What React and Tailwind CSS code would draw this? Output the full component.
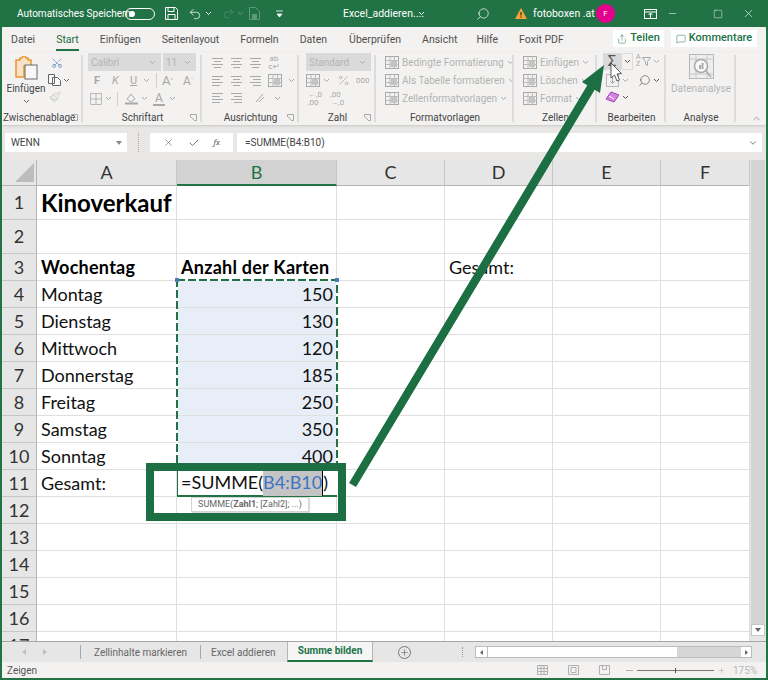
import React from "react";
import { Search, Minus, Square, X, Check, Plus, ChevronDown, ChevronUp, Scissors, Paintbrush, Undo2, Redo2, MessageSquare, Share, Percent } from "lucide-react";

const UI = { fontFamily: 'Roboto, "Noto Sans", sans-serif' };

const Chev = ({ c = "#a9a9a9", cls = "" }) => (
  <svg width="7" height="5" viewBox="0 0 7 5" className={"shrink-0 " + cls}><path d="M1 1l2.5 2.5L6 1" stroke={c} strokeWidth="1" fill="none" /></svg>
);
const Lines = ({ kind = "c", w = 13 }) => {
  const m = { l: [[1, 12], [1, 9], [1, 12], [1, 9]], c: [[1, 12], [3, 10], [1, 12], [3, 10]], r: [[1, 12], [4, 12], [1, 12], [4, 12]] }[kind];
  return (
    <svg width={w} height="12" viewBox="0 0 13 12" className="shrink-0">
      {m.map((a, i) => <path key={i} d={`M${a[0]} ${1.5 + i * 3}H${a[1]}`} stroke="#a9a9a9" strokeWidth="1" />)}
    </svg>
  );
};
const StyleIcon = () => (
  <svg width="14" height="13" viewBox="0 0 14 13" className="shrink-0"><rect x=".5" y=".5" width="13" height="12" fill="#f3f2f1" stroke="#a9a9a9" /><path d="M.5 4.500h13M.5 8.500h13M5 .5v12M9.500.5v12" stroke="#bcbcbc" /><rect x="6" y="5" width="6" height="6" fill="#c4c4c4" /></svg>
);
const Combo = ({ w, text }) => (
  <div className={`h-[18px] bg-[#dadada] flex items-center justify-between pl-[3px] pr-[5px] ${w}`}>
    <span className="text-[10px] text-[#b4b4b4]">{text}</span><Chev />
  </div>
);
const Group = ({ w, label, launcher = true, left = false, children }) => (
  <div className={`${w} shrink-0 flex flex-col h-full relative`}>
    <div className="h-[55px] shrink-0 flex">{children}</div>
    <div className={`flex-1 flex items-center text-[10px] text-[#444] pt-[2px] whitespace-nowrap ${left ? "pl-[1px]" : "justify-center"}`}>{label}</div>
    {launcher && <svg width="7" height="7" viewBox="0 0 7 7" className="absolute right-[5px] bottom-[4px]"><path d="M.5 3V.5H6.500V6.500H4M1 3l3 3" stroke="#a9a9a9" fill="none" /></svg>}
    <div className="absolute right-0 top-[3px] bottom-[3px] w-[2px] bg-[#dcdcdc]" />
  </div>
);
const Tab = ({ ml, children, active }) => (
  <div className={`${ml} relative text-[10.5px] whitespace-nowrap ${active ? "text-[#1e6b40]" : "text-[#505050]"}`}>
    {children}
    {active && <div className="absolute left-0 right-0 top-[17px] h-[2px] bg-[#217346]" />}
  </div>
);
const StyleRow = ({ label }) => (
  <div className="h-[18px] flex items-center gap-[3px]">
    <StyleIcon /><span className="text-[10px] text-[#b2b2b2] whitespace-nowrap">{label}</span><Chev />
  </div>
);

const rows = [
  [1, "Kinoverkauf", "", "h"], [2, "", ""], [3, "Wochentag", "Anzahl der Karten", "b"],
  [4, "Montag", "150"], [5, "Dienstag", "130"], [6, "Mittwoch", "120"], [7, "Donnerstag", "185"],
  [8, "Freitag", "250"], [9, "Samstag", "350"], [10, "Sonntag", "400"], [11, "Gesamt:", ""],
  [12, "", ""], [13, "", ""], [14, "", ""], [15, "", ""], [16, "", ""], [17, "", ""],
];
const CELL = { fontFamily: 'Lato, "Liberation Sans", sans-serif' };

export default function App() {
  return (
    <div style={UI} className="w-[768px] h-[680px] relative overflow-hidden flex flex-col bg-[#f3f2f1] border-x-2 border-b-2 border-[#217346]">
      {/* Title bar */}
      <div className="h-[27px] shrink-0 -mx-[2px] bg-[#217346] flex items-center text-white text-[10.5px]">
        <span className="ml-[17px] w-[103px] whitespace-nowrap text-[10px]">Automatisches Speichern</span>
        <div className="ml-[5px] w-[30px] h-[12px] rounded-full border border-white flex items-center pl-[3px]"><div className="w-[6px] h-[6px] rounded-full bg-white" /></div>
        <svg width="13" height="13" viewBox="0 0 13 13" className="ml-[10px]"><path d="M.5.5h10l2 2v10H.5zM3 .5v4h6v-4M3 12.500v-5h7v5" stroke="#fff" fill="none" /></svg>
        <Undo2 size={14} strokeWidth={1.3} className="ml-[10px]" />
        <Chev c="#fff" cls="ml-[3px]" />
        <Redo2 size={13} strokeWidth={1.1} className="ml-[10px] text-[#5c9a78]" />
        <Chev c="#5c9a78" cls="ml-[2px]" />
        <svg width="11" height="13" viewBox="0 0 11 13" className="ml-[5px]"><path d="M.5.5h6l4 4v8H.5z" stroke="#5c9a78" fill="none" /><path d="M3 7h5v5H3z" fill="#5c9a78" /></svg>
        <svg width="7" height="8" viewBox="0 0 7 8" className="ml-[16px]"><path d="M0 1h7M1 4h5l-2.500 3z" stroke="#fff" fill="#fff" strokeWidth=".8" /></svg>
        <span className="ml-[60px] w-[72px] whitespace-nowrap">Excel_addieren....</span>
        <Chev c="#fff" cls="ml-[3px]" />
        <Search size={14} strokeWidth={1.2} className="ml-[51px] -scale-x-100" />
        <svg width="12" height="11" viewBox="0 0 12 11" className="ml-[25px]"><path d="M6 0l6 11H0z" fill="#f2a33c" /><path d="M6 4v3.500M6 8.500v1.200" stroke="#3a2a10" strokeWidth="1.200" /></svg>
        <span className="ml-[6px] w-[57px] whitespace-nowrap">fotoboxen .at</span>
        <div className="ml-[6px] w-[19px] h-[19px] rounded-full bg-[#e3008c] flex items-center justify-center text-[8px]">F</div>
        <svg width="13" height="10" viewBox="0 0 13 10" className="ml-[29px]"><rect x=".5" y=".5" width="12" height="9" stroke="#fff" fill="none" /><path d="M.5 3h12M6.500 9V4.500M4.500 6l2-2 2 2" stroke="#fff" fill="none" /></svg>
        <Minus size={11} strokeWidth={1.2} className="ml-[10px]" />
        <Square size={10} strokeWidth={1.1} className="ml-[35px]" />
        <X size={13} strokeWidth={1.1} className="ml-[19px]" />
      </div>

      {/* Ribbon tabs */}
      <div className="h-[25px] shrink-0 flex items-center pt-[1px]">
        <Tab ml="ml-[9px]">Datei</Tab>
        <Tab ml="ml-[21px]" active>Start</Tab>
        <Tab ml="ml-[21px]">Einfügen</Tab>
        <Tab ml="ml-[21px]">Seitenlayout</Tab>
        <Tab ml="ml-[21px]">Formeln</Tab>
        <Tab ml="ml-[21px]">Daten</Tab>
        <Tab ml="ml-[22px]">Überprüfen</Tab>
        <Tab ml="ml-[21px]">Ansicht</Tab>
        <Tab ml="ml-[19px]">Hilfe</Tab>
        <Tab ml="ml-[21px]">Foxit PDF</Tab>
        <div className="absolute left-[611px] top-[30px] w-[51px] h-[17px] bg-white flex items-center justify-center gap-[3px] text-[11px] text-[#217346] font-medium"><Share size={10} strokeWidth={1.2} />Teilen</div>
        <div className="absolute left-[669px] top-[30px] w-[86px] h-[17px] bg-white flex items-center justify-center gap-[3px] text-[11px] text-[#217346] font-medium"><MessageSquare size={10} strokeWidth={1.2} />Kommentare</div>
      </div>

      {/* Ribbon */}
      <div className="h-[73px] shrink-0 flex shadow-[0_1px_2px_#c8c8c8] relative">
        <Group w="w-[81px]" label="Zwischenablage" left>
          <div className="w-[46px] flex flex-col items-center pt-[4px] pl-[2px]">
            <svg width="23" height="24" viewBox="0 0 23 24"><path d="M1 4h4V2h2l1-2h2l1 2h2v2h3v6H9v11H1z" fill="#f7e3c8" stroke="#e8952f" strokeWidth="1.500" /><rect x="10" y="9" width="12" height="14" fill="#f8f8f8" stroke="#6a6a6a" /></svg>
            <span className="text-[10px] text-[#444] mt-[3px] leading-[12px]">Einfügen</span>
            <Chev c="#666" cls="mt-[4px]" />
          </div>
          <div className="flex flex-col pt-[5px] gap-[5px]">
            <Scissors size={12} strokeWidth={1.2} className="ml-[3px] text-[#4a7ebb] -rotate-90" />
            <div className="flex items-center gap-[2px]"><svg width="13" height="12" viewBox="0 0 13 12"><path d="M.5.5h6v9h-6zM4.500 3.500h5l3 3v5h-8z" stroke="#666" fill="#f8f8f8" /></svg><Chev c="#666" /></div>
            <Paintbrush size={12} strokeWidth={1.2} className="text-[#b4b4b4] ml-[1px]" />
          </div>
        </Group>
        <Group w="w-[119px]" label="Schriftart">
          <div className="flex flex-col pl-[5px] w-full">
            <div className="flex gap-[2px] mt-[1px]"><Combo w="w-[73px]" text="Calibri" /><Combo w="w-[33px]" text="11" /></div>
            <div className="h-[21px] flex items-center text-[#a8a8a8] text-[11px]">
              <b className="ml-[6px] w-[18px] font-bold">F</b><i className="w-[18px]">K</i><u className="w-[13px]">U</u><Chev /><span className="ml-[6px] mr-[5px] w-px h-[15px] bg-[#d0d0d0]" /><span className="text-[13px] w-[20px]">A<sup className="text-[6px]">^</sup></span><span className="text-[12px] ml-px">A<sup className="text-[6px]">ˇ</sup></span>
            </div>
            <div className="h-[18px] flex items-center">
              <svg width="12" height="12" viewBox="0 0 12 12" className="ml-[2px]"><path d="M.5.500h11v11H.5zM6 .5v11M.5 6h11" stroke="#b8b8b8" fill="none" /></svg>
              <Chev cls="ml-[3px]" /><span className="mx-[5px] w-px h-[14px] bg-[#d0d0d0]" />
              <svg width="13" height="13" viewBox="0 0 13 13" className="ml-[2px]"><path d="M2 7l4-5 4 5-4 3z" fill="none" stroke="#a9a9a9" /><path d="M0 11.500h13" stroke="#a9a9a9" strokeWidth="2" /></svg>
              <Chev cls="ml-[3px]" />
              <span className="ml-[5px] text-[12px] leading-[12px] text-[#a8a8a8] border-b-2 border-[#a9a9a9] px-[2px]">A</span>
              <Chev cls="ml-[4px]" />
            </div>
          </div>
        </Group>
        <Group w="w-[97px]" label="Ausrichtung">
          <div className="flex flex-col pl-[9px] w-full pt-[2px]">
            <div className="h-[18px] flex items-center gap-[6px]"><Lines kind="c" /><Lines kind="c" /><Lines kind="c" /><span className="text-[8px] leading-[8px] text-[#a8a8a8] w-[12px] text-center">ab<br />c↵</span></div>
            <div className="h-[18px] flex items-center gap-[6px]"><Lines kind="l" /><Lines kind="c" /><Lines kind="r" /><StyleIcon /><Chev /></div>
            <div className="h-[18px] flex items-center gap-[6px]"><Lines kind="l" /><Lines kind="r" /><svg width="14" height="12" viewBox="0 0 14 12" className="ml-[5px]"><path d="M2 10L9 2M5 10l5-5" stroke="#a9a9a9" fill="none" /></svg><Chev /></div>
          </div>
        </Group>
        <Group w="w-[77px]" label="Zahl">
          <div className="flex flex-col pl-[7px] w-full">
            <div className="mt-[1px]"><Combo w="w-[65px]" text="Standard" /></div>
            <div className="h-[21px] flex items-center text-[#a8a8a8]"><StyleIcon /><Chev cls="ml-[3px]" /><Percent size={13} strokeWidth={1.300} className="ml-[7px]" /><span className="text-[8px] ml-[6px]">000</span></div>
            <div className="h-[18px] flex items-center text-[8px] leading-[8px] text-[#a8a8a8] gap-[8px] pl-[2px]"><span>←,0<br />,00</span><span>,00<br />→,0</span></div>
          </div>
        </Group>
        <Group w="w-[138px]" label="Formatvorlagen" launcher={false}>
          <div className="flex flex-col pl-[9px] pt-[1px]"><StyleRow label="Bedingte Formatierung" /><StyleRow label="Als Tabelle formatieren" /><StyleRow label="Zellenformatvorlagen" /></div>
        </Group>
        <Group w="w-[83px]" label="Zellen" launcher={false}>
          <div className="flex flex-col pl-[9px] pt-[1px]"><StyleRow label="Einfügen" /><StyleRow label="Löschen" /><StyleRow label="Format" /></div>
        </Group>
        <Group w="w-[69px]" label="Bearbeiten" launcher={false}>
          <div className="flex flex-col pl-[6px] w-full">
            <div className="h-[18px] flex items-center">
              <div className="w-[18px] h-[17px] bg-[#d9d9d9] flex items-center justify-center text-[15px] text-[#555] leading-none">Σ</div>
              <div className="w-[12px] h-[17px] border border-[#dcdcdc] flex items-center justify-center"><Chev c="#555" /></div>
              <span className="ml-[3px] text-[7px] leading-[7px] text-[#a8a8a8]">A<br />Z</span>
              <svg width="9" height="9" viewBox="0 0 9 9" className="ml-[1px]"><path d="M.5.500h8L5.500 4.500v4l-2-1v-3z" stroke="#a9a9a9" fill="none" /></svg>
              <Chev cls="ml-[2px]" />
            </div>
            <div className="h-[18px] flex items-center mt-[1px]">
              <svg width="13" height="13" viewBox="0 0 13 13" className="ml-[3px]"><rect x=".5" y=".5" width="12" height="12" fill="#f2f2f2" stroke="#b8b8b8" /><path d="M6.500 3v6M4 7l2.500 2.500L9 7" stroke="#a9a9a9" fill="none" /></svg>
              <Chev cls="ml-[3px]" />
              <Search size={13} strokeWidth={1.200} className="ml-[9px] -scale-x-100 text-[#555]" />
              <Chev c="#555" cls="ml-[2px]" />
            </div>
            <div className="h-[16px] flex items-center">
              <svg width="13" height="12" viewBox="0 0 13 12" className="ml-[3px]"><path d="M5 1l8 3-5 7-8-3z" fill="#d383e0" stroke="#a53fb8" /><path d="M3 5l5 3" stroke="#fff" /></svg>
              <Chev c="#555" cls="ml-[3px]" />
            </div>
          </div>
        </Group>
        <Group w="w-[70px]" label="Analyse" launcher={false}>
          <div className="flex flex-col items-center w-full pt-[2px]">
            <svg width="25" height="25" viewBox="0 0 25 25"><rect x=".5" y=".5" width="24" height="24" fill="#eeeeee" stroke="#b8b8b8" /><path d="M.5 5h24M.5 20h24M7 .5v24M18 .5v24" stroke="#c8c8c8" /><circle cx="12" cy="12" r="6.500" fill="#f8f8f8" stroke="#a9a9a9" strokeWidth="1.500" /><path d="M10 15v-4h2v4zM12.500 15V9h2v6z" fill="#a9a9a9" /><path d="M17 17l5 6" stroke="#a9a9a9" strokeWidth="1.500" /></svg>
            <span className="text-[10px] text-[#b4b4b4] mt-[2px] whitespace-nowrap">Datenanalyse</span>
          </div>
        </Group>
        <ChevronUp size={11} strokeWidth={1.200} className="absolute right-[4px] bottom-[1px] text-[#555]" />
      </div>

      {/* Formula bar */}
      <div className="h-[35px] shrink-0 bg-[#e8e7e6] flex pt-[8px] pl-[3px] pr-[4px]">
        <div className="h-[19px] w-[122px] bg-white flex items-center justify-between pl-[6px] pr-[5px]">
          <span className="text-[10px] text-[#444]">WENN</span><svg width="6" height="4" viewBox="0 0 6 4"><path d="M0 0h6L3 4z" fill="#888" /></svg>
        </div>
        <div className="ml-[11px] w-[1px] h-[19px] border-l border-dotted border-[#aaa]" />
        <div className="ml-[11px] h-[19px] w-[83px] bg-white flex items-center justify-around px-[6px]">
          <X size={11} strokeWidth={1.400} className="text-[#666]" />
          <Check size={12} strokeWidth={1.800} className="text-[#666]" />
          <span className="text-[9px] italic font-serif text-[#666]">fx</span>
        </div>
        <div className="ml-[4px] h-[19px] flex-1 bg-white flex items-center justify-between pl-[8px] pr-[4px]">
          <span className="text-[10px] text-[#444]">=SUMME(B4:B10)</span><ChevronDown size={10} className="text-[#666]" />
        </div>
      </div>

      {/* Sheet */}
      <div className="h-[481px] shrink-0 flex overflow-hidden relative bg-white">
        <div style={CELL} className="w-[748px] shrink-0 grid grid-cols-[35px_140px_160px_108px_108px_108px_89px] grid-rows-[26px_34px_34px_27px_27px_27px_27px_27px_27px_27px_27px_27px_27px_27px_27px_27px_27px_27px] text-[#111] text-[18px]">
          <div className="bg-[#e6e6e6] border-b border-r border-[#b5b5b5] flex items-end justify-end pr-[2px] pb-[3px]">
            <div className="w-0 h-0 border-l-[19px] border-l-transparent border-b-[19px] border-b-[#bdbdbd]" />
          </div>
          {["A", "B", "C", "D", "E", "F"].map((c) => (
            <div key={c} className={`flex items-center justify-center border-r text-[18px] ${c === "B" ? "bg-[#d2d2d2] text-[#217346] border-b-2 border-b-[#217346] border-r-[#c6c6c6]" : "bg-[#e6e6e6] text-[#333] border-b border-[#c6c6c6] border-b-[#b5b5b5]"}`}>{c}</div>
          ))}
          {rows.map(([n, a, b, kind]) => (
            <React.Fragment key={n}>
              <div className="bg-[#e6e6e6] border-b border-r border-[#c6c6c6] border-r-[#b5b5b5] flex items-center justify-center text-[18px] text-[#333]">{n}</div>
              <div className={`border-b border-r border-[#dfdfdf] flex items-center pl-[4px] whitespace-nowrap ${kind === "h" ? "text-[24px] font-bold text-black" : kind === "b" ? "font-bold text-black tracking-[0.25px]" : ""}`}>{a}</div>
              <div className={`border-b border-r border-[#dfdfdf] flex items-center whitespace-nowrap ${n >= 4 && n <= 10 ? "justify-end pr-[3px] bg-[#e7eef8]" : "pl-[4px]"} ${kind === "b" ? "font-bold text-black tracking-[0.25px]" : ""}`}>{b}</div>
              <div className="border-b border-r border-[#dfdfdf]" />
              <div className="border-b border-r border-[#dfdfdf] flex items-center pl-[4px] whitespace-nowrap">{n === 3 ? "Gesamt:" : ""}</div>
              <div className="border-b border-r border-[#dfdfdf]" />
              <div className="border-b border-r border-[#dfdfdf]" />
            </React.Fragment>
          ))}
        </div>
        <div className="flex-1 bg-[#e6e6e6] flex flex-col">
          <div className="flex-1 mx-[1px] bg-[#d4d4d4]" />
          <div className="h-[12px] mx-[1px] bg-white border border-[#c6c6c6] flex items-center justify-center"><svg width="6" height="4" viewBox="0 0 6 4"><path d="M0 0h6L3 4z" fill="#666" /></svg></div>
          <div className="h-[5px]" />
        </div>

        {/* Marching ants around B4:B10 */}
        <svg width="164" height="194" viewBox="0 0 164 194" className="absolute left-[173px] top-[118px] pointer-events-none">
          <rect x="2" y="2" width="160" height="190" fill="none" stroke="#fff" strokeWidth="2" />
          <rect x="2" y="2" width="160" height="190" fill="none" stroke="#217346" strokeWidth="2" strokeDasharray="8 3" />
          <rect x="0" y="0" width="4" height="4" fill="#4a7ebb" />
          <rect x="160" y="0" width="4" height="4" fill="#4a7ebb" />
        </svg>
        {/* Active cell editor */}
        <div style={CELL} className="absolute left-[175px] top-[309px] w-[160px] h-[28px] bg-white border-b-2 border-[#217346] border-l border-l-[#217346] flex items-center pl-[3px] text-[18px] text-[#111] whitespace-nowrap">
          =SUMME(<span className="bg-[#c4c4c4] text-[#3f74c4] border-r border-black">B4:B10</span>)
        </div>
        {/* Tooltip */}
        <div style={UI} className="absolute left-[189px] top-[337px] w-[118px] h-[15px] bg-white border border-[#d4d4d4] shadow-[1px_1px_1px_#ddd] flex items-center justify-center text-[9px] text-[#666] whitespace-nowrap">
          SUMME(<b className="font-bold">Zahl1</b>; [Zahl2]; ...)
        </div>
      </div>

      {/* Sheet tabs */}
      <div className="h-[21px] shrink-0 bg-[#e6e6e6] border-t border-[#a6a6a6] flex items-center text-[#666]">
        <svg width="4" height="6" viewBox="0 0 4 6" className="ml-[20px]"><path d="M4 0v6L0 3z" fill="#c0c0c0" /></svg>
        <svg width="4" height="6" viewBox="0 0 4 6" className="ml-[17px]"><path d="M0 0v6l4-3z" fill="#c0c0c0" /></svg>
        <span className="ml-[33px] w-px h-[14px] bg-[#a6a6a6]" />
        <span className="ml-[13px] w-[92px] text-[10px] whitespace-nowrap">Zellinhalte markieren</span>
        <span className="ml-[14px] w-px h-[14px] bg-[#a6a6a6]" />
        <span className="ml-[10px] w-[65px] text-[10px] whitespace-nowrap">Excel addieren</span>
        <div className="ml-[11px] w-[86px] h-[20px] -mt-[1px] bg-[#f5f5f5] border-x border-[#b5b5b5] border-b-2 border-b-[#217346] flex items-center justify-center text-[10px] font-bold text-[#217346] whitespace-nowrap">Summe bilden</div>
        <div className="ml-[25px] w-[13px] h-[13px] rounded-full border border-[#777] flex items-center justify-center"><Plus size={9} strokeWidth={2} className="text-[#777]" /></div>
        <div className="ml-[51px] h-[10px] border-l border-dotted border-[#999]" />
        <div className="ml-[12px] w-[277px] h-[12px] bg-[#d6d6d6] flex items-center border border-[#bcbcbc]">
          <div className="w-[12px] h-full bg-white flex items-center justify-center border-r border-[#bcbcbc]"><svg width="3" height="5" viewBox="0 0 3 5"><path d="M3 0v5L0 2.500z" fill="#666" /></svg></div>
          <div className="w-[189px] h-full bg-white" />
          <div className="flex-1" />
          <div className="w-[10px] h-full bg-white flex items-center justify-center"><svg width="3" height="5" viewBox="0 0 3 5"><path d="M0 0v5l3-2.500z" fill="#666" /></svg></div>
        </div>
      </div>

      {/* Status bar */}
      <div className="flex-1 flex items-center text-[10px] text-[#555]">
        <span className="ml-[5px] w-[530px]">Zeigen</span>
        <svg width="11" height="10" viewBox="0 0 11 10"><path d="M.5.5h10v9H.5zM.5 3.500h10M.5 6.500h10M4 .5v9M7 .5v9" stroke="#b0b0b0" fill="none" /></svg>
        <svg width="11" height="10" viewBox="0 0 11 10" className="ml-[20px]"><path d="M.5.5h10v9H.5zM3 2.500h5v5H3z" stroke="#b0b0b0" fill="none" /></svg>
        <svg width="11" height="10" viewBox="0 0 11 10" className="ml-[20px]"><path d="M.5.5h10v9H.5zM3.500.5v4h4v-4" stroke="#b0b0b0" fill="none" /></svg>
        <span className="ml-[16px] w-[7px] h-px bg-[#b0b0b0]" />
        <div className="ml-[4px] w-[77px] h-px bg-[#777] relative"><div className="absolute left-[38px] -top-[2px] w-px h-[5px] bg-[#555]" /></div>
        <Plus size={7} className="ml-[4px] text-[#b0b0b0]" />
        <span className="ml-[8px] text-[#b8b8b8]">175%</span>
      </div>

      {/* Annotation overlays */}
      <div className="absolute left-[144px] top-[463px] w-[200px] h-[58px] border-[8px] border-[#1c6e43] pointer-events-none" />
      <svg width="768" height="680" viewBox="0 0 768 680" className="absolute -left-[2px] top-0 pointer-events-none">
        <path d="M604 65L582 82 587.300 85.300 349 483 356 487 594.700 89.700 600 93z" fill="#1c6e43" />
        <path d="M611 63v15l3.500-3 2.500 6 2.500-1-2.500-6 4.500-.5z" fill="#fff" stroke="#333" strokeWidth=".8" />
      </svg>
    </div>
  );
}
